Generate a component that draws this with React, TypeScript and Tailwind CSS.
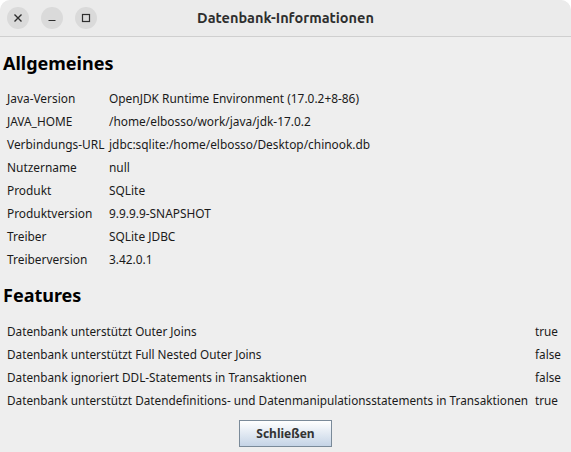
const general = [
  ["Java-Version", "OpenJDK Runtime Environment (17.0.2+8-86)"],
  ["JAVA_HOME", "/home/elbosso/work/java/jdk-17.0.2"],
  ["Verbindungs-URL", "jdbc:sqlite:/home/elbosso/Desktop/chinook.db"],
  ["Nutzername", "null"],
  ["Produkt", "SQLite"],
  ["Produktversion", "9.9.9.9-SNAPSHOT"],
  ["Treiber", "SQLite JDBC"],
  ["Treiberversion", "3.42.0.1"],
];

const features = [
  ["Datenbank unterstützt Outer Joins", "true"],
  ["Datenbank unterstützt Full Nested Outer Joins", "false"],
  ["Datenbank ignoriert DDL-Statements in Transaktionen", "false"],
  ["Datenbank unterstützt Datendefinitions- und Datenmanipulationsstatements in Transaktionen", "true"],
];

export default function App() {
  return (
    <div className="w-[571px] h-[452px] bg-[#eeeeee] overflow-hidden font-['Noto_Sans',sans-serif] text-[#1a1a1a] flex flex-col rounded-t-[10px]">
      <div className="h-[37px] shrink-0 bg-[#ebebeb] border-b border-[#cfcfcf] rounded-t-[10px] flex items-center relative">
        <div className="flex gap-[12px] pl-[7px]">
          <button className="w-[22px] h-[22px] rounded-full bg-[#dadada] flex items-center justify-center">
            <svg width="10" height="10" viewBox="0 0 10 10">
              <path d="M1.5 1.5 L8.5 8.5 M8.5 1.5 L1.5 8.5" stroke="#2e2e2e" strokeWidth="1.4" />
            </svg>
          </button>
          <button className="w-[22px] h-[22px] rounded-full bg-[#dadada] flex items-center justify-center">
            <svg width="10" height="10" viewBox="0 0 10 10">
              <path d="M1.5 7.5 H8.5" stroke="#2e2e2e" strokeWidth="1.2" />
            </svg>
          </button>
          <button className="w-[22px] h-[22px] rounded-full bg-[#dadada] flex items-center justify-center">
            <svg width="10" height="10" viewBox="0 0 10 10">
              <rect x="1.5" y="1.5" width="7" height="7" fill="none" stroke="#2e2e2e" strokeWidth="1.2" />
            </svg>
          </button>
        </div>
        <div className="absolute inset-0 flex items-center justify-center pointer-events-none">
          <span className="text-[14.5px] font-semibold text-[#2e2e2e] font-['Ubuntu','Noto_Sans',sans-serif]">
            Datenbank-Informationen
          </span>
        </div>
      </div>

      <div className="flex-1 flex flex-col px-[3px]">
        <h2 className="text-[18px] font-bold mt-[13px] leading-[26px] text-black">Allgemeines</h2>
        <div className="mt-[11px] pl-[4px] grid grid-cols-[102px_1fr] text-[11.9px]">
          {general.map(([k, v]) => (
            <div key={k} className="contents">
              <div className="h-[23px] leading-[23px] whitespace-nowrap">{k}</div>
              <div className="h-[23px] leading-[23px] whitespace-nowrap">{v}</div>
            </div>
          ))}
        </div>
        <h2 className="text-[18px] font-bold mt-[11px] leading-[26px] text-black">Features</h2>
        <div className="mt-[12px] pl-[4px] grid grid-cols-[528px_1fr] text-[11.75px]">
          {features.map(([k, v]) => (
            <div key={k} className="contents">
              <div className="h-[23px] leading-[23px] whitespace-nowrap">{k}</div>
              <div className="h-[23px] leading-[23px] whitespace-nowrap">{v}</div>
            </div>
          ))}
        </div>
        <div className="flex justify-center mt-[8px]">
          <button className="w-[93px] h-[27px] border border-[#7a8a99] bg-gradient-to-b from-white to-[#c5d4e6] text-[12px] font-bold text-[#333]">
            Schließen
          </button>
        </div>
      </div>
    </div>
  );
}
